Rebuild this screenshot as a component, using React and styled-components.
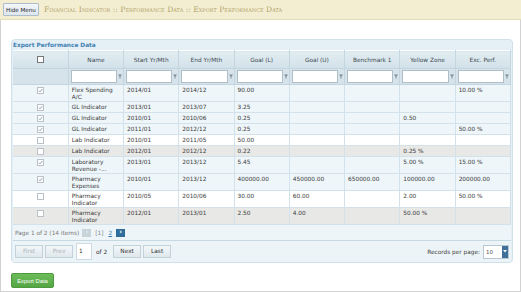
import React from "react";
import styled, { createGlobalStyle } from "styled-components";

const GlobalStyle = createGlobalStyle`
  html, body {
    margin: 0;
    padding: 0;
    background: #fff;
    font-family: "DejaVu Sans", Verdana, sans-serif;
  }
`;

const TopBar = styled.div`
  height: 19px;
  background: #f3eed2;
  border-bottom: 1px solid #e4dcb8;
  display: flex;
  align-items: center;
  padding-left: 3px;
  gap: 5px;
`;

const HideButton = styled.button`
  height: 13px;
  padding: 0 2px;
  font-family: "DejaVu Sans", Verdana, sans-serif;
  font-size: 5.6px;
  color: #222;
  background: linear-gradient(#f4f7fa, #dde6ee);
  border: 1px solid #aebdca;
  border-radius: 1px;
`;

const Crumbs = styled.div`
  font-family: "DejaVu Serif", serif;
  font-variant: small-caps;
  font-size: 7.6px;
  color: #b3a46c;
`;

const Content = styled.div`
  height: 272px;
  box-sizing: border-box;
  border: 1px solid #d2d2d2;
  border-top: none;
  padding: 19px 7px 0 10px;
`;

const Panel = styled.div`
  background: #e4f0f6;
  border: 1px solid #cfe1ea;
  border-radius: 4px;
  padding: 0 1px;
  overflow: hidden;
`;

const PanelTitle = styled.div`
  height: 10px;
  line-height: 10px;
  font-size: 5.8px;
  font-weight: bold;
  color: #3f7fb1;
`;

const Grid = styled.table`
  width: 498px;
  border-collapse: collapse;
  table-layout: fixed;
  font-size: 5.8px;
  color: #3a3a3a;
  border-top: 1px solid #fff;
`;

const HeadCell = styled.th`
  height: 17px;
  font-weight: normal;
  text-align: center;
  color: #3d4a52;
  background: linear-gradient(#e2edf2, #d2e1e9);
  border-right: 1px solid #c3d5df;
  border-bottom: 1px solid #c3d5df;
  padding: 0;
`;

const FilterCell = styled.td`
  height: 15px;
  background: #d6e3ea;
  border-right: 1px solid #c3d5df;
  border-bottom: 1px solid #c3d5df;
  padding: 0 1px 0 2px;
`;

const FilterWrap = styled.div`
  display: flex;
  align-items: center;
  gap: 1px;
`;

const FilterInput = styled.div`
  flex: 1;
  height: 11px;
  background: #fff;
  border: 1px solid #aebfca;
`;

const Row = styled.tr`
  background: ${(p) => (p.$selected ? "#eef6f9" : p.$alt ? "#e8e8e6" : "#ffffff")};
`;

const Cell = styled.td`
  box-sizing: border-box;
  height: ${(p) => (p.$tall ? 17 : 11)}px;
  vertical-align: top;
  padding: 2px 3px 0 3px;
  line-height: 6.5px;
  border-right: 1px solid #d3e2ea;
  border-bottom: 1px solid #d3e2ea;
  white-space: pre-line;
  overflow: hidden;
`;

const Box = styled.span`
  display: block;
  width: 5px;
  height: 5px;
  margin: ${(p) => (p.$dark ? "0 auto" : "0 auto")};
  border: 1px solid ${(p) => (p.$dark ? "#777" : "#b8c2c8")};
  background: #fff;
  position: relative;
  svg {
    position: absolute;
    left: 0;
    top: 0;
  }
`;

const PagerRow = styled.div`
  height: 15px;
  background: #eef5f8;
  border-bottom: 1px solid #c6d8e2;
  display: flex;
  align-items: center;
  padding-left: 2px;
  gap: 3px;
  font-size: 5.8px;
  color: #777;
`;

const PageNav = styled.span`
  display: inline-block;
  width: 9px;
  height: 8px;
  background: ${(p) => (p.$active ? "#2f6e9c" : "#c7d4da")};
  color: ${(p) => (p.$active ? "#fff" : "#e6eef2")};
  font-size: 7px;
  line-height: 7px;
  text-align: center;
  font-weight: bold;
`;

const PageNum = styled.span`
  color: ${(p) => (p.$link ? "#3b78b0" : "#888")};
  text-decoration: ${(p) => (p.$link ? "underline" : "none")};
  margin: 0 1px;
`;

const Toolbar = styled.div`
  height: 21px;
  background: #edf4f7;
  display: flex;
  align-items: center;
  padding-left: 2px;
  padding-right: 1px;
  gap: 2px;
  font-size: 5.8px;
  color: #333;
`;

const NavButton = styled.div`
  width: 26px;
  height: 11px;
  line-height: 11px;
  text-align: center;
  border: 1px solid #c3d1d9;
  background: linear-gradient(#f3f7f9, #dfe8ed);
  color: ${(p) => (p.$disabled ? "#a8b2b8" : "#333")};
`;

const PageInput = styled.div`
  width: 12px;
  height: 15px;
  background: #fff;
  border: 1px solid #cfdbe2;
  line-height: 15px;
  padding-left: 2px;
  margin-left: 1px;
`;

const OfText = styled.span`
  margin: 0 4px 0 2px;
`;

const Spacer = styled.div`
  flex: 1;
`;

const Records = styled.span`
  color: #444;
  margin-right: 1px;
`;

const Select = styled.div`
  display: flex;
  width: 24px;
  height: 12px;
  border: 1px solid #b9c9d3;
  background: #fff;
  margin-right: 1px;
`;

const SelectValue = styled.span`
  flex: 1;
  padding-left: 2px;
  line-height: 12px;
  font-size: 5.4px;
  color: #555;
`;

const SelectArrow = styled.span`
  width: 6px;
  background: #40709a;
  display: flex;
  align-items: center;
  justify-content: center;
`;

const ExportButton = styled.button`
  display: block;
  margin-top: 10px;
  height: 15px;
  width: 43px;
  padding: 0;
  font-family: "Liberation Sans", Arial, sans-serif;
  font-size: 5.8px;
  color: #fff;
  background: linear-gradient(#6cbd5a, #55a544);
  border: 1px solid #4d9a3d;
  border-radius: 2px;
`;

const columns = [
  "",
  "Name",
  "Start Yr/Mth",
  "End Yr/Mth",
  "Goal (L)",
  "Goal (U)",
  "Benchmark 1",
  "Yellow Zone",
  "Exc. Perf.",
];

const rows = [
  { sel: true, tall: true, c: ["Flex Spending\nA/C", "2014/01", "2014/12", "90.00", "", "", "", "10.00 %"] },
  { sel: true, c: ["GL Indicator", "2013/01", "2013/07", "3.25", "", "", "", ""] },
  { sel: true, c: ["GL Indicator", "2010/01", "2010/06", "0.25", "", "", "0.50", ""] },
  { sel: true, c: ["GL Indicator", "2011/01", "2012/12", "0.25", "", "", "", "50.00 %"] },
  { sel: false, c: ["Lab Indicator", "2010/01", "2011/05", "50.00", "", "", "", ""] },
  { sel: false, c: ["Lab Indicator", "2012/01", "2012/12", "0.22", "", "", "0.25 %", ""] },
  { sel: true, tall: true, c: ["Laboratory\nRevenue -...", "2013/01", "2013/12", "5.45", "", "", "5.00 %", "15.00 %"] },
  { sel: true, tall: true, c: ["Pharmacy\nExpenses", "2010/01", "2013/12", "400000.00", "450000.00", "650000.00", "100000.00", "200000.00"] },
  { sel: false, tall: true, c: ["Pharmacy\nIndicator", "2010/05", "2010/06", "30.00", "60.00", "", "2.00", "50.00 %"] },
  { sel: false, tall: true, c: ["Pharmacy\nIndicator", "2012/01", "2013/01", "2.50", "4.00", "", "50.00 %", ""] },
];

function Funnel() {
  return (
    <svg width="4" height="5" viewBox="0 0 4 5">
      <path d="M0 0.5 H4 L2.5 2.5 V4.5 H1.5 V2.5 Z" fill="#7b8a93" />
    </svg>
  );
}

function Check({ checked, dark }) {
  return (
    <Box $dark={dark}>
      {checked && (
        <svg width="5" height="5" viewBox="0 0 5 5">
          <path d="M0.8 2.6 L2 3.8 L4.3 1" stroke="#7d8a92" strokeWidth="0.8" fill="none" />
        </svg>
      )}
    </Box>
  );
}

export default function App() {
  return (
    <>
      <GlobalStyle />
      <TopBar>
        <HideButton>Hide Menu</HideButton>
        <Crumbs>Financial Indicator :: Performance Data :: Export Performance Data</Crumbs>
      </TopBar>
      <Content>
        <Panel>
          <PanelTitle>Export Performance Data</PanelTitle>
          <Grid>
            <thead>
              <tr>
                {columns.map((c, i) => (
                  <HeadCell key={i}>{i === 0 ? <Check dark /> : c}</HeadCell>
                ))}
              </tr>
              <tr>
                {columns.map((c, i) => (
                  <FilterCell key={i}>
                    {i > 0 && (
                      <FilterWrap>
                        <FilterInput />
                        <Funnel />
                      </FilterWrap>
                    )}
                  </FilterCell>
                ))}
              </tr>
            </thead>
            <tbody>
              {rows.map((r, i) => (
                <Row key={i} $selected={r.sel} $alt={i % 2 === 1}>
                  <Cell $tall={r.tall}>
                    <Check checked={r.sel} />
                  </Cell>
                  {r.c.map((v, j) => (
                    <Cell key={j} $tall={r.tall}>
                      {v}
                    </Cell>
                  ))}
                </Row>
              ))}
            </tbody>
          </Grid>
          <PagerRow>
            <span>Page 1 of 2 (14 items)</span>
            <PageNav>‹</PageNav>
            <PageNum>[1]</PageNum>
            <PageNum $link>2</PageNum>
            <PageNav $active>›</PageNav>
          </PagerRow>
          <Toolbar>
            <NavButton $disabled>First</NavButton>
            <NavButton $disabled>Prev</NavButton>
            <PageInput>1</PageInput>
            <OfText>of 2</OfText>
            <NavButton>Next</NavButton>
            <NavButton>Last</NavButton>
            <Spacer />
            <Records>Records per page:</Records>
            <Select>
              <SelectValue>10</SelectValue>
              <SelectArrow>
                <svg width="4" height="3" viewBox="0 0 4 3">
                  <path d="M0 0 H4 L2 2.5 Z" fill="#fff" />
                </svg>
              </SelectArrow>
            </Select>
          </Toolbar>
        </Panel>
        <ExportButton>Export Data</ExportButton>
      </Content>
    </>
  );
}
